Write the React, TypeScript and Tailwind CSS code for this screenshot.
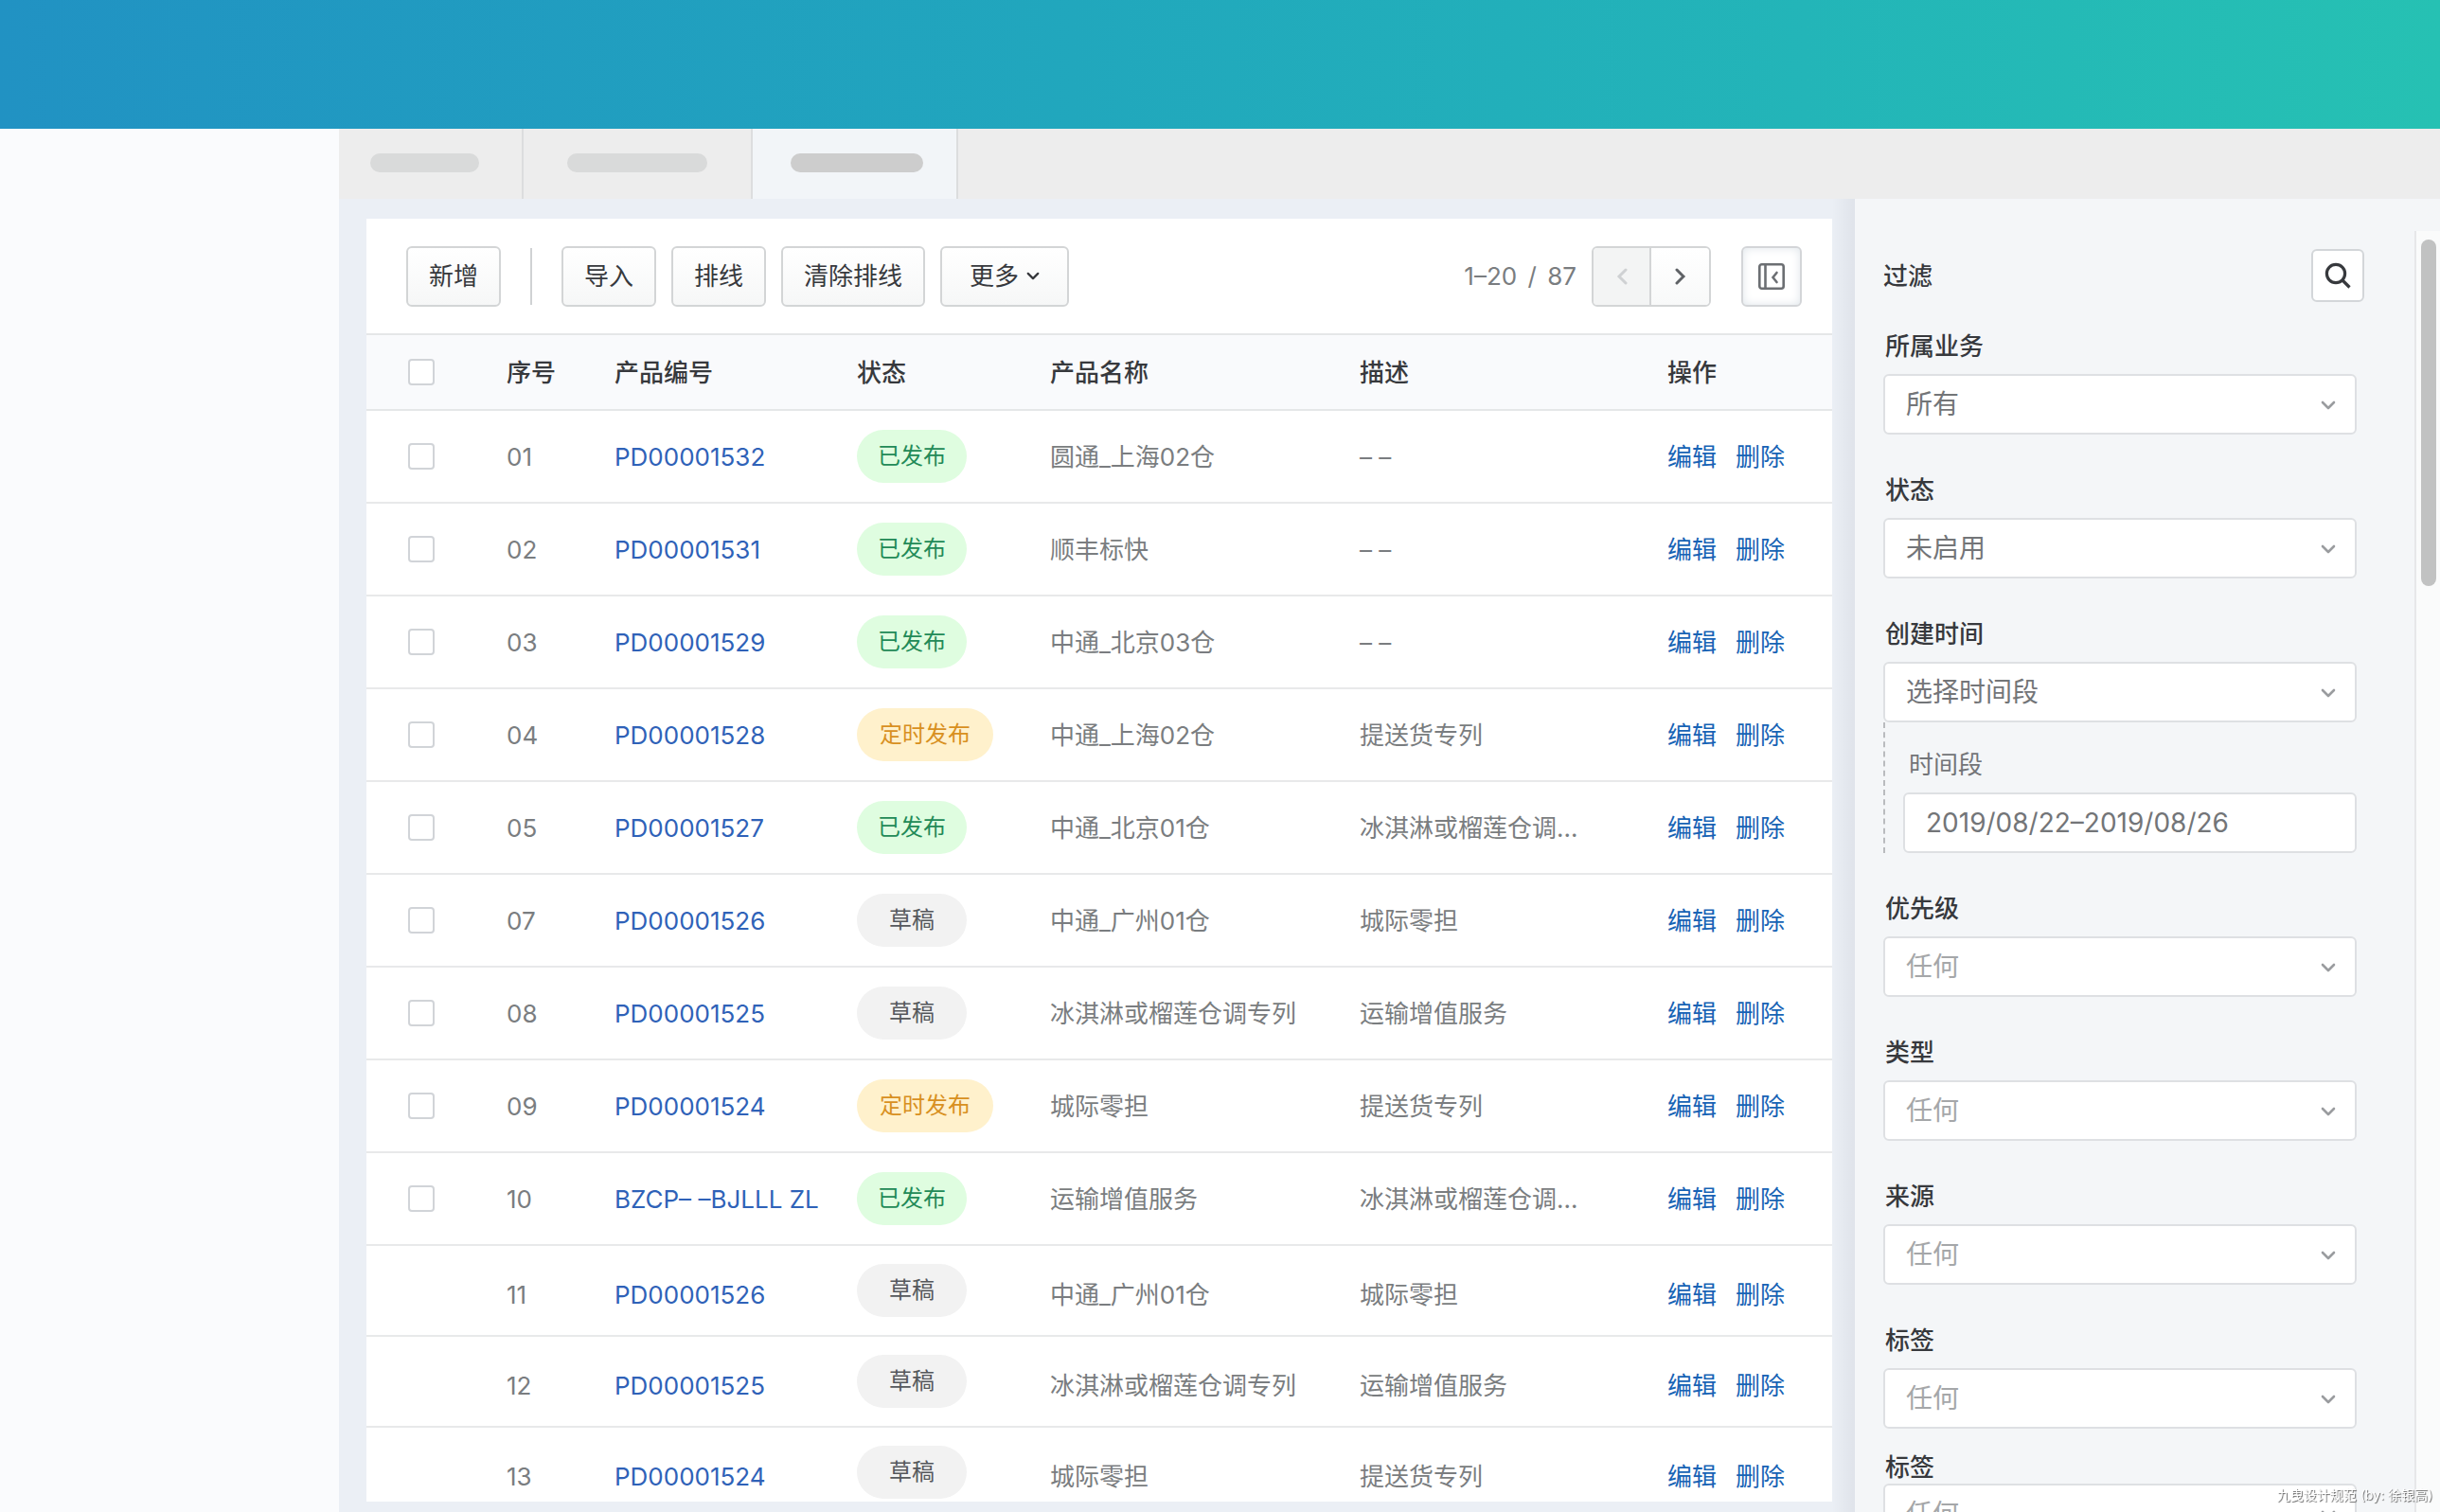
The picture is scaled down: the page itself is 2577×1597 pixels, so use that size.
import { useState } from "react";

type Status = "published" | "scheduled" | "draft";

interface Row {
  no: string;
  code: string;
  status: Status;
  name: string;
  desc: string;
  locked?: boolean;
}

const ROWS: Row[] = [
  { no: "01", code: "PD00001532", status: "published", name: "圆通_上海02仓", desc: "– –" },
  { no: "02", code: "PD00001531", status: "published", name: "顺丰标快", desc: "– –" },
  { no: "03", code: "PD00001529", status: "published", name: "中通_北京03仓", desc: "– –" },
  { no: "04", code: "PD00001528", status: "scheduled", name: "中通_上海02仓", desc: "提送货专列" },
  { no: "05", code: "PD00001527", status: "published", name: "中通_北京01仓", desc: "冰淇淋或榴莲仓调…" },
  { no: "07", code: "PD00001526", status: "draft", name: "中通_广州01仓", desc: "城际零担" },
  { no: "08", code: "PD00001525", status: "draft", name: "冰淇淋或榴莲仓调专列", desc: "运输增值服务" },
  { no: "09", code: "PD00001524", status: "scheduled", name: "城际零担", desc: "提送货专列" },
  { no: "10", code: "BZCP– –BJLLL ZL", status: "published", name: "运输增值服务", desc: "冰淇淋或榴莲仓调…" },
  { no: "11", code: "PD00001526", status: "draft", name: "中通_广州01仓", desc: "城际零担", locked: true },
  { no: "12", code: "PD00001525", status: "draft", name: "冰淇淋或榴莲仓调专列", desc: "运输增值服务", locked: true },
  { no: "13", code: "PD00001524", status: "draft", name: "城际零担", desc: "提送货专列", locked: true },
];

const BADGES: Record<Status, { label: string; className: string }> = {
  published: { label: "已发布", className: "px-[22px] bg-[#dffde0] text-[#228a57]" },
  scheduled: { label: "定时发布", className: "px-6 bg-[#fff1cc] text-[#d8901f]" },
  draft: { label: "草稿", className: "px-[22px] bg-[#f2f2f2] text-[#55585c]" },
};

const BUTTON =
  "h-16 rounded-md border-2 border-[#d3d5d6] bg-linear-to-b from-white to-[#f6f7f7] px-[22px] text-[#37393d]";

const CHECKBOX = "block size-7 appearance-none rounded border-2 border-[#d1d4d8] bg-white";

function Chevron({ className }: { className: string }) {
  return (
    <svg viewBox="0 0 16 10" fill="none" stroke="currentColor" strokeWidth="2.6" strokeLinecap="round" strokeLinejoin="round" className={className}>
      <path d="M2 2l6 6 6-6" />
    </svg>
  );
}

function SelectField({ id, label, value, muted, tight }: { id: string; label: string; value: string; muted?: boolean; tight?: boolean }) {
  return (
    <div>
      <label htmlFor={id} className={`block pl-[2px] leading-[34px] font-medium text-[#37393d] ${tight ? "" : "mb-3"}`}>
        {label}
      </label>
      <div className="relative">
        <select
          id={id}
          className={`block h-16 w-full appearance-none rounded-md border-2 border-[#dee0e3] bg-white px-[22px] text-[28px] ${
            muted ? "text-[#a5a7a9]" : "text-[#737578]"
          }`}
        >
          <option>{value}</option>
        </select>
        <Chevron className="pointer-events-none absolute top-7 right-[22px] h-[10px] w-4 text-[#9a9c9f]" />
      </div>
    </div>
  );
}

function Toolbar() {
  return (
    <div className="flex h-[121px] items-center gap-4 pr-8 pl-[42px]">
      <button className={BUTTON}>新增</button>
      <span className="mx-[15px] h-[60px] w-[2px] bg-[#d0d2d4]" />
      <button className={BUTTON}>导入</button>
      <button className={BUTTON}>排线</button>
      <button className={BUTTON}>清除排线</button>
      <button className={`${BUTTON} flex w-[136px] items-center justify-center gap-2`}>
        更多
        <Chevron className="h-[9px] w-[14px]" />
      </button>

      <span className="ml-auto text-[#7a7d80]">
        1–20 <span className="mx-1">/</span> 87
      </span>
      <div className="flex h-16 overflow-hidden rounded-md border-2 border-[#d3d5d6]">
        <button aria-label="上一页" className="flex w-[61px] items-center justify-center border-r-2 border-[#d3d5d6] bg-[#f3f4f4] text-[#cfd1d3]">
          <svg viewBox="0 0 12 18" fill="none" stroke="currentColor" strokeWidth="3" strokeLinecap="round" className="h-[18px] w-3">
            <path d="M10 2L3 9l7 7" />
          </svg>
        </button>
        <button aria-label="下一页" className="flex w-[61px] items-center justify-center bg-linear-to-b from-white to-[#f8f9f9] text-[#5f6266]">
          <svg viewBox="0 0 12 18" fill="none" stroke="currentColor" strokeWidth="3" strokeLinecap="round" className="h-[18px] w-3">
            <path d="M2 2l7 7-7 7" />
          </svg>
        </button>
      </div>
      <button aria-label="收起筛选" className="ml-4 flex size-16 items-center justify-center rounded-md border-2 border-[#d3d5d8] bg-white text-[#6c6f73] shadow-[inset_0_0_10px_#dfe5ea]">
        <svg viewBox="0 0 28 28" fill="none" stroke="currentColor" strokeWidth="2.6" strokeLinecap="round" className="size-7">
          <rect x="1.3" y="1.3" width="25.4" height="25.4" rx="2.5" />
          <path d="M7.5 2v24M19.5 10L15.5 15l4 5" />
        </svg>
      </button>
    </div>
  );
}

function ProductTable() {
  return (
    <table className="w-full table-fixed border-collapse text-left">
      <colgroup>
        <col className="w-[148px]" />
        <col className="w-[114px]" />
        <col className="w-[256px]" />
        <col className="w-[204px]" />
        <col className="w-[327px]" />
        <col className="w-[325px]" />
        <col className="w-[174px]" />
      </colgroup>
      <thead>
        <tr className="h-20 border-y-2 border-[#e5e7e8] bg-[#f9fafc] text-[#37393d] *:font-medium">
          <th className="pl-11">
            <input type="checkbox" aria-label="全选" className={CHECKBOX} />
          </th>
          <th>序号</th>
          <th>产品编号</th>
          <th>状态</th>
          <th>产品名称</th>
          <th>描述</th>
          <th>操作</th>
        </tr>
      </thead>
      <tbody>
        {ROWS.map((row) => (
          <tr
            key={row.no}
            className={`border-b-2 border-[#e8e9ea] text-[#7a7d80] ${row.locked ? "h-24 [&>td:not(:nth-child(4))]:pt-2" : "h-[98px]"}`}
          >
            <td className="pl-11">
              {!row.locked && <input type="checkbox" aria-label={`选择 ${row.no}`} className={CHECKBOX} />}
            </td>
            <td>{row.no}</td>
            <td className="whitespace-nowrap">
              <a href="#" className="text-[#2f62b8]">{row.code}</a>
            </td>
            <td>
              <span
                className={`flex h-14 w-fit min-w-[116px] items-center justify-center rounded-full text-[24px] ${BADGES[row.status].className}`}
              >
                {BADGES[row.status].label}
              </span>
            </td>
            <td>{row.name}</td>
            <td>{row.desc}</td>
            <td>
              <div className="flex gap-5 text-[#1763b5]">
                <a href="#">编辑</a>
                <a href="#">删除</a>
              </div>
            </td>
          </tr>
        ))}
      </tbody>
    </table>
  );
}

function FilterPanel() {
  const [range, setRange] = useState("2019/08/22–2019/08/26");

  return (
    <aside className="flex w-[618px] shrink-0 overflow-hidden bg-[#f4f6f8]">
      <div className="flex-1 pt-[53px] pr-[53px] pl-[30px]">
        <div className="flex items-center justify-between">
          <h2 className="font-medium text-[#37393d]">过滤</h2>
          <button aria-label="搜索" className="flex size-14 items-center justify-center rounded-md border-2 border-[#d3d6d9] bg-white text-[#37393d]">
            <svg viewBox="0 0 28 28" fill="none" stroke="currentColor" strokeWidth="3.2" className="size-7">
              <circle cx="12" cy="12" r="9.6" />
              <path d="M18.500 18.500l8 8" />
            </svg>
          </button>
        </div>

        <form className="mt-[30px] mr-2">
          <div className="flex flex-col gap-[42px]">
            <SelectField id="business" label="所属业务" value="所有" />
            <SelectField id="status" label="状态" value="未启用" />
            <div>
              <SelectField id="created" label="创建时间" value="选择时间段" />
              <div className="border-l-2 border-dashed border-[#b9bbbe] pt-7 pl-[19px]">
                <label htmlFor="range" className="mb-3 block pl-[6px] leading-[34px] text-[#737578]">
                  时间段
                </label>
                <input
                  id="range"
                  value={range}
                  onChange={(e) => setRange(e.target.value)}
                  className="block h-16 w-full rounded-md border-2 border-[#dee0e3] bg-white px-[22px] text-[28px] text-[#737578]"
                />
              </div>
            </div>
            <SelectField id="priority" label="优先级" value="任何" muted />
            <SelectField id="type" label="类型" value="任何" muted />
            <SelectField id="source" label="来源" value="任何" muted />
            <SelectField id="tag" label="标签" value="任何" muted />
          </div>
          <div className="mt-6">
            <SelectField id="tag2" label="标签" value="任何" muted tight />
          </div>
        </form>
      </div>
      <div className="mt-[34px] w-[27px] border-l-2 border-[#e6e7e9] bg-[#fafbfb] px-[5px] pt-[9px]">
        <div className="h-[366px] w-4 rounded-full bg-[#c1c2c2]" />
      </div>
    </aside>
  );
}

export default function App() {
  return (
    <div className="flex h-screen flex-col overflow-hidden bg-[#fafbfd] font-[Inter,'Noto_Sans_CJK_SC',sans-serif] text-[26px]">
      <header className="h-[136px] shrink-0 bg-linear-to-r from-[#2192c3] to-[#26c1b3]" />
      <div className="flex min-h-0 flex-1">
        <div className="w-[358px] shrink-0" />
        <main className="flex min-w-0 flex-1 flex-col bg-[#ebeff5]">
          <nav className="flex h-[74px] shrink-0 bg-[#ededed]">
            <a href="#" aria-label="标签页一" className="flex w-[195px] items-start border-r-2 border-[#dcddde] pt-[26px] pl-[33px]">
              <span className="h-5 w-[115px] rounded-full bg-[#d9dada]" />
            </a>
            <a href="#" aria-label="标签页二" className="flex w-[242px] items-start border-r-2 border-[#dcddde] pt-[26px] pl-[46px]">
              <span className="h-5 w-[148px] rounded-full bg-[#d9dada]" />
            </a>
            <a href="#" aria-label="标签页三" className="flex w-[217px] items-start border-r-2 border-[#dcddde] bg-[#f2f5f8] pt-[26px] pl-10">
              <span className="h-5 w-[140px] rounded-full bg-[#cdcdcd]" />
            </a>
          </nav>
          <div className="flex min-h-0 flex-1">
            <section className="mt-[21px] mb-[11px] ml-[29px] min-w-0 flex-1 overflow-hidden bg-white">
              <Toolbar />
              <ProductTable />
            </section>
            <div className="w-6 shrink-0 bg-linear-to-r from-[#ebeff5] to-[#dfe3ea]" />
            <FilterPanel />
          </div>
        </main>
      </div>
      <p className="fixed right-2 bottom-2 text-[14px] text-white [text-shadow:1px_1px_1px_#666]">九曳设计规范 (by: 徐银高)</p>
    </div>
  );
}
